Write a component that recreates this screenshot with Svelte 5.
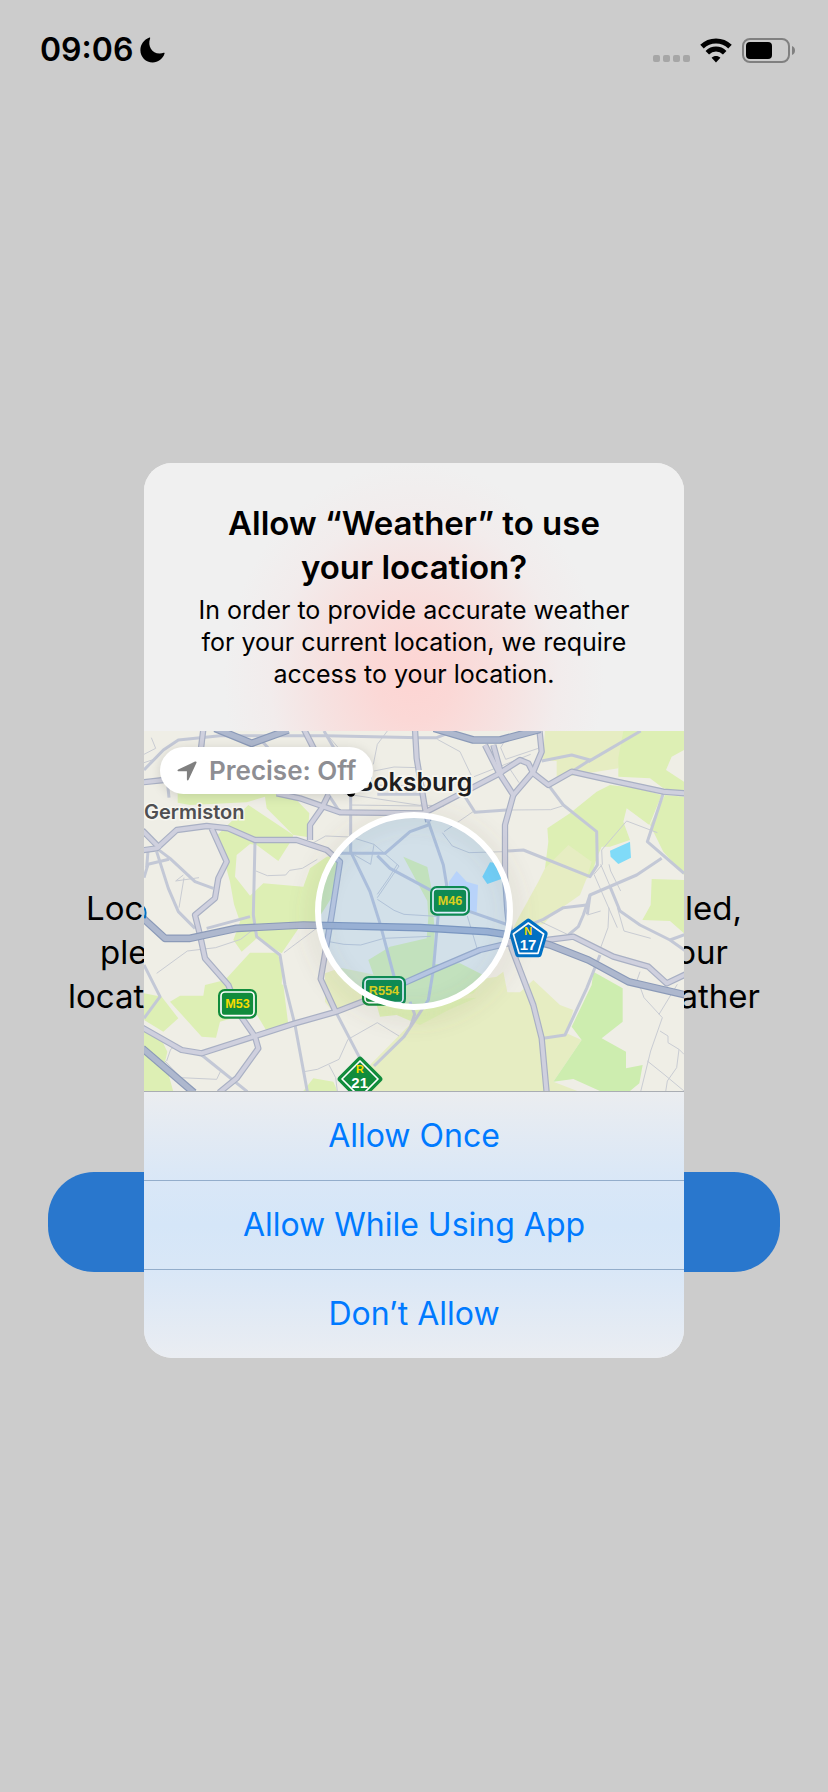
<script>
  const land = [
    ['park', '101,180 101,215 138,222 308,214 363,197 368,232 448,312 490,318 496,247 448,197 338,180'],
    ['park', '313,222 448,312 443,327 403,390 338,342 318,339 278,372 273,437 318,494 358,457 478,467 498,412 548,377 585,372 575,480 525,560 515,572 465,590 413,667 338,622 293,662 268,627 288,572 270,520 258,452 220,312'],
    ['park', '318,665 400,665 416,712 413,760 418,762 433,882 366,897 333,842 228,872 216,920 173,917 78,812 108,794 178,794 183,762 243,747'],
    ['park', '0,787 53,797 103,862 58,902 0,867'],
    ['park', '0,902 48,917 70,962 63,992 88,1082 0,1082'],
    ['park', '478,1080 508,1042 568,1052 580,1080'],
    ['field', '543,727 590,710 720,737 700,810 570,845 543,812'],
    ['field', '640,1080 663,1032 680,1000 828,850 808,837 860,800 898,762 1058,737 1078,722 1090,784 1128,784 1168,747 1248,822 1288,837 1268,907 1313,927 1228,1052 1300,1080'],
    ['park', '698,822 818,812 998,800 918,835 828,882 758,852 708,857'],
    ['park', '673,687 738,647 848,622 853,560 850,510 778,377 850,408 862,470 872,600 868,700 948,697 1028,737 988,787 818,832 708,787'],
    ['field', '1203,0 1440,0 1423,112 1238,142 1238,90 1195,90'],
    ['park', '1438,0 1620,0 1620,57 1583,77 1566,117 1620,152 1620,187 1558,172 1518,142 1423,137 1423,80'],
    ['park', '1398,162 1478,172 1553,192 1516,282 1448,232 1438,272 1458,327 1398,347 1373,347 1358,382 1343,432 1328,442 1203,412 1213,332 1210,292 1278,247 1358,182'],
    ['park', '1563,192 1620,197 1620,432 1558,362 1518,282'],
    ['field', '1203,412 1273,342 1343,392 1328,442 1308,492 1258,527 1228,547 1198,580 1108,590 1128,552 1183,452'],
    ['park', '1523,444 1620,447 1620,607 1578,570 1495,567 1520,522'],
    ['wood', '1348,722 1436,772 1436,872 1373,922 1446,962 1446,1012 1496,1002 1486,1057 1458,1080 1368,1080 1288,1044 1228,1052 1313,927 1283,887 1343,762'],
    ['campus', '938,420 968,452 1002,462 998,545 908,545 915,452'],
    ['water', '1038,394 1064,397 1072,444 1030,459 1015,437'],
    ['water', '1398,359 1458,332 1461,380 1423,399 1400,377']
  ];

  const lanes = [
    '0,70 35,52 22,20', '0,95 30,85', '168,42 185,100', '165,440 95,450 118,432',
    '336,420 370,434 425,432 437,418 475,412 520,385', '38,727 130,660 215,650 290,625 335,590',
    '120,440 105,530', '420,665 520,590', '68,990 80,955 100,940', '63,990 110,1040 218,1045 230,1020',
    '480,1022 520,1015 585,985 612,925 700,875 765,915', '555,1002 575,1040 580,1080',
    '540,0 600,70 590,160 828,165', '440,180 560,182 840,225', '620,222 835,225', '688,100 700,40 730,0',
    '690,120 750,108 820,110', '500,340 545,315 620,318 690,340 765,405 700,500', '690,340 680,400 623,367',
    '880,25 948,62 985,140', '1183,52 1085,85 1070,50 1085,25', '990,137 1160,70', '1095,110 1125,155',
    '900,302 990,240', '895,305 925,345 975,365 1080,362', '1093,237 1220,236 1255,225', '828,222 900,225',
    '700,505 750,538 780,550 878,556', '555,632 600,640 650,642 720,622 860,616', '970,555 1000,655',
    '700,490 735,440 760,400', '1373,357 1448,270 1540,305', '1373,357 1375,400 1350,430 1420,590',
    '1395,400 1400,420 1430,480', '1370,400 1400,470', '1190,572 1270,610', '1395,530 1392,590 1370,650',
    '1330,552 1370,540', '1420,530 1440,600 1520,622', '1488,722 1480,745 1500,800 1555,860 1520,960 1490,1082',
    '1545,850 1600,760', '1548,900 1572,915 1572,935 1605,955 1598,1010 1570,1050 1565,1082', '1510,990 1560,1030 1620,1080',
    '1605,955 1620,970'
  ];

  const streets = [
    '0,117 58,57 103,27 228,14 548,14 828,20 878,20 928,0', '333,332 328,552 338,617 408,672 423,762 453,882 490,1082',
    '38,362 73,472 103,542 153,592', '188,592 318,557', '0,702 48,797 0,862', '173,972 310,1082',
    '38,352 78,382 153,452 208,472', '0,440 12,400 75,385', '12,360 8,410',
    '588,367 723,367 798,302 853,282', '700,374 738,412 868,482 978,542 1093,582', '620,190 620,362 678,482 708,577 753,747',
    '963,197 993,244 1088,237', '1213,162 1258,222 1358,302 1360,402 1338,437 1138,357 1088,360',
    '1193,90 1283,72 1338,87 1283,122', '1333,92 1490,0', '1558,187 1510,332 1620,427',
    '1553,382 1478,432 1338,492 1318,552 1303,587 1273,612', '1398,467 1428,540 1488,582 1578,627 1625,660',
    '1578,627 1625,610', '1168,577 1198,565 1258,530 1328,522', '1368,672 1328,772 1263,912 1198,922',
    '853,272 898,402 908,462 883,547 868,717 853,807 780,917 690,1005', '575,842 648,982', '540,0 570,52',
    '340,15 372,50', '798,812 812,850 800,885', '553,190 588,244', '70,150 75,200', '700,190 843,190', '1338,492 1330,550'
  ];

  const arterials = [
    '-5,358 38,352 98,297 188,285 253,292 333,327 458,327 548,357 588,392 563,552 530,744 575,842', '-5,298 48,352',
    '203,292 248,392 223,442 213,502 153,552 168,612 183,682 253,762 288,852 333,917 343,952 278,1042 225,1085',
    '-5,890 113,957 173,967 328,917 453,877 578,842 668,807 778,757 868,717 1008,657 1093,637 1208,627 1288,617 1408,677 1513,707 1568,757 1625,730',
    '398,187 468,202 588,244 838,247 1058,132 1128,87 1153,97 1168,127 1213,162 1283,122 1418,152 1558,182 1625,187',
    '553,192 533,232 498,282 498,327', '813,-5 818,82 843,232 853,272',
    '1023,42 1063,122 1108,192 1083,282 1083,432 1090,540 1103,652 1168,822 1193,922 1208,1085',
    '1108,192 1168,122 1193,62 1186,-5', '-5,154 60,147', '178,-5 170,60', '480,-5 513,60', '1048,42 1072,130'
  ];

  const motorways = [
    '-5,560 63,622 138,622 278,592 478,582 828,590 1030,602 1098,612 1218,642 1333,687 1453,752 1625,792',
    '213,-8 323,37 433,-3', '870,-8 988,27 1068,27 1188,-5', '-5,952 150,1085'
  ];

  const plates = [
    { x: 222, y: 774, w: 117, name: 'M53' },
    { x: 858, y: 465, w: 120, name: 'M46' },
    { x: 654, y: 735, w: 132, name: 'R554' }
  ];

  const choices = ['Allow Once', 'Allow While Using App', 'Don’t Allow'];
</script>

<div class="screen">
  <header class="status">
    <div class="clock">
      <time>09:06</time>
      <svg width="25" height="26" viewBox="0 0 25 26" aria-hidden="true">
        <path d="M9.4 .6C10 .2 10.4 .6 10.1 1.4C7.3 8.6 12 16.8 19.8 16.6C21.2 16.6 22.6 16.2 23.6 15.8C24.3 15.5 24.8 15.9 24.5 16.7C22.7 22 18 25.4 12.7 25.4C5.8 25.4 .4 20 .4 13.2C.4 7.6 3.9 2.7 9.4 .6Z" />
      </svg>
    </div>
    <div class="signals">
      <svg class="dots" width="37" height="25" viewBox="0 0 37 25" aria-hidden="true">
        {#each [0, 10, 20, 30] as x}<rect {x} y="17" width="7" height="7" rx="2" />{/each}
      </svg>
      <svg width="32" height="25" viewBox="0 0 32 25" aria-hidden="true">
        <path d="M16 24.4 11.6 19.8C14 17.4 18 17.4 20.4 19.8Z" />
        <path class="wave" d="M2 8.600C9.8 1 22.2 1 30 8.6M7.300 14.7C12.2 9.9 19.8 9.9 24.7 14.7" />
      </svg>
      <svg width="54" height="25" viewBox="0 0 54 25" aria-hidden="true">
        <rect class="shell" x="1" y="1" width="46" height="23" rx="7" />
        <rect x="4" y="4" width="26" height="17" rx="4" />
        <path class="nub" d="M50 8C54 9.5 54 15.5 50 17Z" />
      </svg>
    </div>
  </header>

  <main>
    <svg class="pin" viewBox="0 0 24 24" aria-hidden="true"><path d="M12 6a4 4 0 0 0-4 4c0 3 4 8 4 8s4-5 4-8a4 4 0 0 0-4-4Z" /></svg>
    <div class="notice">
      <p class="first"><span>Loca</span><span>led,</span></p>
      <p class="second"><span>ple</span><span>our</span></p>
      <p class="third"><span>locat</span><span>ather</span></p>
    </div>
    <button class="settings" aria-label="Open settings"></button>
  </main>

  <div class="overlay">
    <div class="dialog" role="alertdialog" aria-labelledby="ask" aria-describedby="why">
      <div class="copy">
        <h1 id="ask">Allow “Weather” to use<br />your location?</h1>
        <p id="why">In order to provide accurate weather<br />for your current location, we require<br />access to your location.</p>
      </div>

      <div class="map">
        <svg viewBox="0 0 1620 1080" role="img" aria-label="Approximate location near Boksburg">
          <defs>
            <filter id="soft" x="-20%" y="-20%" width="140%" height="140%"><feGaussianBlur stdDeviation="30" /></filter>
          </defs>
          <rect class="ground" width="1620" height="1080" />
          {#each land as [kind, points]}<polygon class={kind} {points} />{/each}
          {#each lanes as points}<polyline class="lane" {points} />{/each}
          {#each streets as points}<polyline class="street" {points} />{/each}
          {#each arterials as points}<polyline class="arterial edge" {points} />{/each}
          {#each arterials as points}<polyline class="arterial" {points} />{/each}
          {#each motorways as points}<polyline class="motorway edge" {points} />{/each}
          {#each motorways as points}<polyline class="motorway" {points} />{/each}

          <text class="town" x="0" y="264">Germiston</text>
          <circle cx="621" cy="184" r="13" />
          <text class="city" x="985" y="179" text-anchor="end">Boksburg</text>

          {#each plates as plate}
            <rect class="green" x={plate.x} y={plate.y} width={plate.w} height="89" rx="20" />
            <rect class="rim" x={plate.x + 9} y={plate.y + 9} width={plate.w - 18} height="71" rx="12" />
            <text class="route gold" x={plate.x + plate.w / 2} y={plate.y + 58}>{plate.name}</text>
          {/each}

          <path class="green diamond" d="M648 987L705 1044L648 1101L591 1044Z" />
          <path class="rim" d="M648 990L702 1044L648 1098L594 1044Z" />
          <text class="route">
            <tspan class="small gold" x="648" y="1026">R</tspan><tspan class="number" x="647" y="1072">21</tspan>
          </text>

          <path class="blue" d="M1153 572L1202 608L1184 670H1123L1105 608Z" />
          <path class="rim" d="M1153 576L1199 609L1182 667H1125L1108 609Z" />
          <text class="route">
            <tspan class="small gold" x="1153" y="613">N</tspan><tspan class="number" x="1152" y="657">17</tspan>
          </text>
          <path class="sliver" d="M-6 524Q10 534 2 562" />

          <circle class="halo" cx="810" cy="556" r="298" filter="url(#soft)" />
          <circle class="area" cx="810" cy="540" r="288" />
        </svg>
        <button class="precise">
          <svg width="20" height="20" viewBox="0 0 20 20" aria-hidden="true"><path d="M1.2 8.5 18 .6C19.2 .1 20 .9 19.4 2.1L11.6 18.8C11.1 19.9 9.9 19.7 9.9 18.5V10.3H1.6C.3 10.3 .1 9 1.2 8.5Z" /></svg>
          Precise: Off
        </button>
      </div>

      <div class="choices">
        {#each choices as choice}<button>{choice}</button>{/each}
      </div>
    </div>
  </div>
</div>

<style>
  :global(body) { margin: 0; background: #ccc; }
  .screen {
    position: relative;
    display: flex;
    flex-direction: column;
    min-height: 100vh;
    background: #ccc;
    color: #000;
    font-family: Inter, "Liberation Sans", sans-serif;
  }
  button { margin: 0; border: 0; font: inherit; cursor: pointer; }
  h1, p { margin: 0; }

  .status {
    display: flex;
    justify-content: space-between;
    align-items: center;
    box-sizing: border-box;
    height: 100px;
    padding: 0 32px 0 40px;
  }
  .clock { display: flex; align-items: center; gap: 7px; font-size: 32px; font-weight: 600; line-height: 40px; }
  .signals { display: flex; align-items: center; gap: 10px; }
  .dots { fill: #a6a6a6; }
  .wave { fill: none; stroke: #000; stroke-width: 5; }
  .shell { fill: none; stroke: #808080; stroke-width: 2; }
  .nub { fill: #808080; }

  main {
    flex: 1;
    display: flex;
    flex-direction: column;
    align-items: center;
    justify-content: center;
    padding: 0 48px 100px;
  }
  .pin { width: 326px; height: 326px; margin-bottom: 40px; fill: #d9453d; }
  .notice { width: 100%; font-size: 33px; line-height: 44px; }
  .notice p { display: flex; justify-content: space-between; }
  .first { padding: 0 38px; }
  .second { padding: 0 52px; }
  .third { padding: 0 20px; }
  .settings {
    width: 100%;
    height: 100px;
    margin-top: 154px;
    border-radius: 46px;
    background: #2977cd;
  }

  .overlay {
    position: absolute;
    inset: 0;
    display: flex;
    align-items: center;
    justify-content: center;
    padding-top: 29px;
  }
  .dialog { width: 540px; max-width: 100%; overflow: hidden; border-radius: 28px; background: #f0f0f0; }
  .copy {
    padding: 38px 24px 41px;
    background: radial-gradient(ellipse 190px 215px at 50% 215px, #fdd5d3 0, #fbd8d6 20%, #f6e2e1 50%, #f2ecec 76%, #f0f0f0 100%);
    text-align: center;
  }
  h1 { font-size: 33px; font-weight: 600; line-height: 44px; }
  .copy p { margin-top: 5px; font-size: 25px; line-height: 32px; }

  .map { position: relative; }
  .map > svg { display: block; width: 100%; }
  .ground { fill: #efeee6; }
  .park { fill: #ddefb4; }
  .field { fill: #e6edc2; }
  .wood { fill: #cdedaf; }
  .campus { fill: #d2e0fa; }
  .water { fill: #80dbf8; }
  polyline { fill: none; stroke-linejoin: round; }
  .lane { stroke: #c9ccd3; stroke-width: 3; }
  .street { stroke: #c3c8d6; stroke-width: 9; }
  .arterial { stroke: #cfd0de; stroke-width: 12; }
  .arterial.edge { stroke: #a9b0c4; stroke-width: 19; }
  .motorway { stroke: #aeb8ce; stroke-width: 16; }
  .motorway.edge { stroke: #8b9ab8; stroke-width: 23; }
  .map text { font-weight: 600; paint-order: stroke; }
  .town { fill: #4f4f52; stroke: #f7f6f0; stroke-width: 9; font-size: 60px; }
  .city { fill: #1d1d1f; stroke: #f7f6f0; stroke-width: 10; font-size: 75px; }
  .green { fill: #118c3c; }
  .diamond { stroke: #118c3c; stroke-width: 20; stroke-linejoin: round; }
  .blue { fill: #0070c4; stroke: #0070c4; stroke-width: 18; stroke-linejoin: round; }
  .rim { fill: none; stroke: #fff; stroke-width: 5; stroke-linejoin: round; }
  .map .route { font-family: "Liberation Sans Narrow", "Liberation Sans", sans-serif; font-size: 38px; font-weight: 700; text-anchor: middle; }
  .small { font-size: 33px; }
  .number { fill: #fff; font-size: 45px; }
  .gold { fill: #f7dc00; }
  .sliver { fill: none; stroke: #0070c4; stroke-width: 6; }
  .halo { fill: none; stroke: #6b6650; stroke-opacity: .12; stroke-width: 40; }
  .area { fill: #007aff; fill-opacity: .12; stroke: #fff; stroke-width: 18; }

  .precise {
    position: absolute;
    top: 16px;
    left: 16px;
    display: flex;
    align-items: center;
    gap: 12px;
    height: 47px;
    padding: 0 17px;
    border-radius: 24px;
    background: #fff;
    box-shadow: 0 2px 12px #0002;
    color: #8e8e93;
    font-size: 26px;
    font-weight: 600;
  }
  .precise svg { fill: #808080; }

  .choices { background: linear-gradient(#ebedf0, #d9e7f7 34%, #d5e6f8 50%, #d9e7f7 67%, #eaedf2); }
  .choices button {
    display: block;
    width: 100%;
    height: 89px;
    padding: 0;
    border-top: 1px solid #93adcb;
    background: none;
    color: #007aff;
    font-size: 32px;
    line-height: 44px;
  }
  .choices button:first-child { border-color: #a9adb3; }
</style>
